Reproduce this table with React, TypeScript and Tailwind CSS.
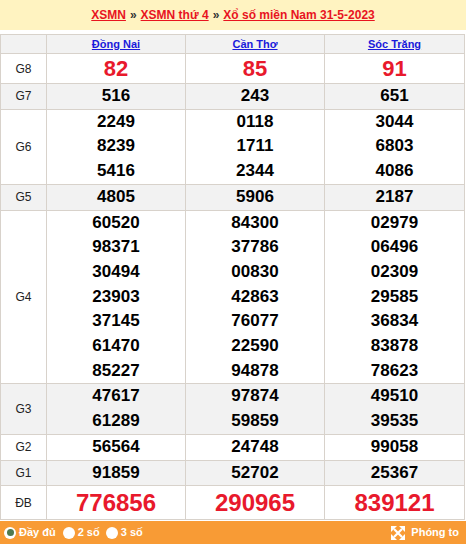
const provinces = ["Đồng Nai", "Cần Thơ", "Sóc Trăng"];

type Row = { label: string; values: string[][]; gray?: boolean; big?: boolean; h: string };

const rows: Row[] = [
  { label: "G8", values: [["82"], ["85"], ["91"]], big: true, h: "h-[29px]" },
  { label: "G7", values: [["516"], ["243"], ["651"]], gray: true, h: "" },
  { label: "G6", values: [["2249", "8239", "5416"], ["0118", "1711", "2344"], ["3044", "6803", "4086"]], h: "" },
  { label: "G5", values: [["4805"], ["5906"], ["2187"]], gray: true, h: "" },
  {
    label: "G4",
    values: [
      ["60520", "98371", "30494", "23903", "37145", "61470", "85227"],
      ["84300", "37786", "00830", "42863", "76077", "22590", "94878"],
      ["02979", "06496", "02309", "29585", "36834", "83878", "78623"],
    ],
    h: "",
  },
  { label: "G3", values: [["47617", "61289"], ["97874", "59859"], ["49510", "39535"]], gray: true, h: "" },
  { label: "G2", values: [["56564"], ["24748"], ["99058"]], h: "" },
  { label: "G1", values: [["91859"], ["52702"], ["25367"]], gray: true, h: "" },
  { label: "ĐB", values: [["776856"], ["290965"], ["839121"]], big: true, h: "h-[33px]" },
];

const Radio = ({ on }: { on?: boolean }) => (
  <span className="w-[12px] h-[12px] rounded-full bg-white flex items-center justify-center">
    {on && <span className="w-[7px] h-[7px] rounded-full bg-[#4f7a4f]" />}
  </span>
);

export default function App() {
  return (
    <div className="w-[466px] h-[544px] bg-white font-['Liberation_Sans',Arial,sans-serif] flex flex-col overflow-hidden">
      <div className="h-[30px] bg-[#fff3c1] flex items-center justify-center text-[12px] font-bold text-[#333]">
        <a className="text-[#e8141f] underline">XSMN</a>
        <span className="mx-[4px]">»</span>
        <a className="text-[#e8141f] underline">XSMN thứ 4</a>
        <span className="mx-[4px]">»</span>
        <a className="text-[#e8141f] underline">Xổ số miền Nam 31-5-2023</a>
      </div>
      <div className="h-[4px]" />
      <table className="w-[464px] table-fixed border-collapse">
        <colgroup>
          <col className="w-[46px]" />
          <col className="w-[139px]" />
          <col className="w-[139px]" />
          <col className="w-[140px]" />
        </colgroup>
        <thead>
          <tr className="bg-[#f2f2f2]">
            <th className="border border-[#d8d2cb] h-[18px] p-0" />
            {provinces.map((p) => (
              <th key={p} className="border border-[#d8d2cb] h-[18px] p-0 text-[11px] font-bold leading-[18px]">
                <a className="text-[#1a1adb] underline">{p}</a>
              </th>
            ))}
          </tr>
        </thead>
        <tbody>
          {rows.map((r) => (
            <tr key={r.label} className={r.gray ? "bg-[#f2f2f2]" : "bg-white"}>
              <td className={`border border-[#d8d2cb] p-0 text-center text-[12px] text-[#222] ${r.h}`}>{r.label}</td>
              {r.values.map((col, i) => (
                <td key={i} className={`border border-[#d8d2cb] p-0 text-center ${r.h}`}>
                  {col.map((v) => (
                    <div
                      key={v}
                      className={
                        r.big
                          ? r.label === "G8"
                            ? "text-[22px] font-bold text-[#e8192c] leading-[29px]"
                            : "text-[24px] font-bold text-[#e8192c] leading-[33px]"
                          : "text-[17px] font-bold text-black leading-[24.7px]"
                      }
                    >
                      {v}
                    </div>
                  ))}
                </td>
              ))}
            </tr>
          ))}
        </tbody>
      </table>
      <div className="h-[23px] bg-[#f89b35] flex items-center pl-[4px] pr-[7px] text-white text-[11px] font-bold mt-auto">
        <div className="flex items-center gap-[3px]">
          <Radio on />
          <span>Đầy đủ</span>
        </div>
        <div className="flex items-center gap-[3px] ml-[7px]">
          <Radio />
          <span>2 số</span>
        </div>
        <div className="flex items-center gap-[3px] ml-[6px]">
          <Radio />
          <span>3 số</span>
        </div>
        <div className="ml-auto flex items-center gap-[6px]">
          <svg width="14" height="14" viewBox="0 0 14 14" fill="white">
            <path d="M0 0h6L0 6z" />
            <path d="M14 0v6L8 0z" />
            <path d="M0 14V8l6 6z" />
            <path d="M14 14H8l6-6z" />
            <path d="M3 3l8 8M11 3l-8 8" stroke="white" strokeWidth="2.2" />
          </svg>
          <span>Phóng to</span>
        </div>
      </div>
    </div>
  );
}
